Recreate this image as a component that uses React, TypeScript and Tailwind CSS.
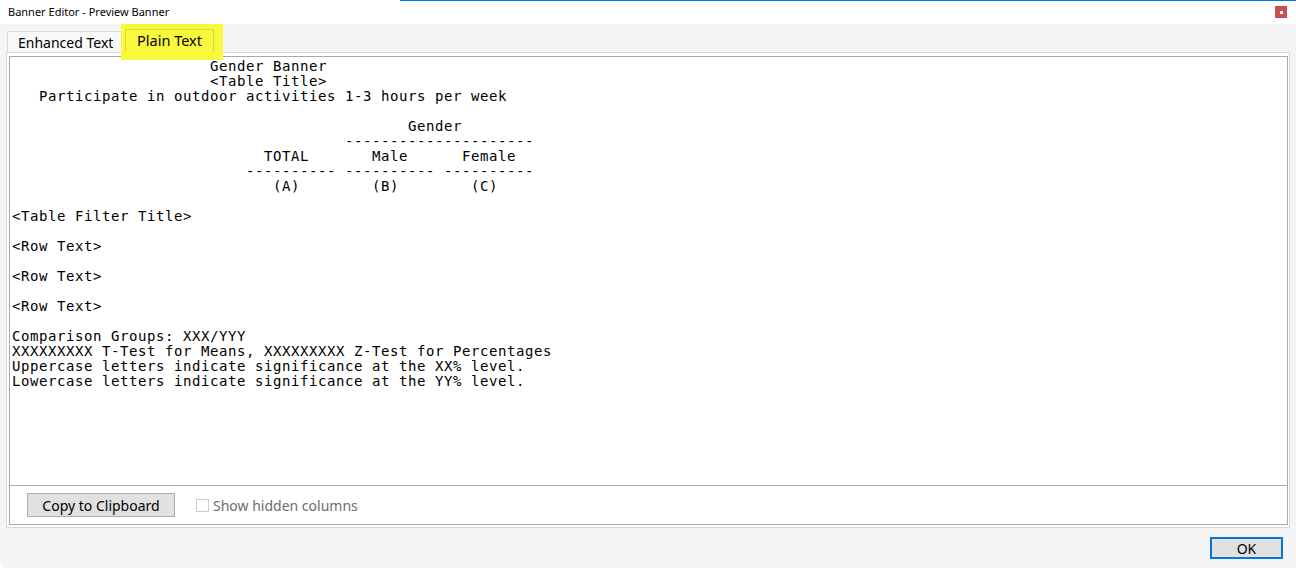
const lines = [
  '                      Gender Banner',
  '                      <Table Title>',
  '   Participate in outdoor activities 1-3 hours per week',
  '',
  '                                            Gender',
  '                                     ---------------------',
  '                            TOTAL       Male      Female',
  '                          ---------- ---------- ----------',
  '                             (A)        (B)        (C)',
  '',
  '<Table Filter Title>',
  '',
  '<Row Text>',
  '',
  '<Row Text>',
  '',
  '<Row Text>',
  '',
  'Comparison Groups: XXX/YYY',
  'XXXXXXXXX T-Test for Means, XXXXXXXXX Z-Test for Percentages',
  'Uppercase letters indicate significance at the XX% level.',
  'Lowercase letters indicate significance at the YY% level.',
]

export default function App() {
  return (
    <div className="w-[1296px] h-[568px] flex flex-col bg-white overflow-hidden font-['Noto_Sans',sans-serif]">
      {/* title bar */}
      <div className="relative h-6 flex items-center px-2 bg-white flex-shrink-0">
        <div className="absolute top-0 left-[400px] right-0 h-px bg-[#0078d7]" />
        <span className="text-[11px] text-black">Banner Editor - Preview Banner</span>
        <div className="flex-1" />
        <div className="w-3 h-3 mr-[1px] bg-[#c75050] flex items-center justify-center">
          <div className="w-[3px] h-[3px] bg-white" />
        </div>
      </div>

      <div className="flex-1 bg-[#f4f4f4] rounded-bl-md flex flex-col px-[6px]">
        {/* tabs */}
        <div className="h-[28px] flex items-end pl-px">
          <div className="w-[118px] h-[21px] pl-[10px] border border-b-0 border-[#dadada] bg-[#f9f9f9] text-[14px] text-black flex items-center">
            Enhanced Text
          </div>
          <div className="h-9 w-[102px] -ml-[4px] mb-[-8px] bg-[#f8f83c] flex items-start justify-start pl-[4px] pt-[5px] z-10">
            <div className="w-[89px] h-[23px] border border-b-0 border-[#dada40] flex items-center justify-center text-[14.5px] text-black">
              Plain Text
            </div>
          </div>
        </div>

        {/* panel */}
        <div className="w-[1284px] h-[476px] border border-[#d9d9d9] bg-white pt-[3px] pl-[2px] pr-px pb-[2px]">
          <div className="h-full border border-[#a9a9a9] flex flex-col">
            <pre className="h-[428px] px-[2px] pt-[2px] bg-white font-['DejaVu_Sans_Mono',monospace] text-[14px] leading-[15px] tracking-[0.57px] text-black">
              {lines.join('\n')}
            </pre>
            <div className="flex-1 border-t border-[#a9a9a9] bg-white flex items-center px-[17px] gap-[21px]">
              <button className="w-[148px] h-6 bg-[#e1e1e1] border border-[#adadad] text-[14px] text-black">
                Copy to Clipboard
              </button>
              <label className="flex items-center gap-[4px] text-[14px] text-[#6d6d6d]">
                <span className="w-[13px] h-[13px] border border-[#cccccc] bg-white" />
                Show hidden columns
              </label>
            </div>
          </div>
        </div>

        <div className="flex justify-end pt-[9px] pr-[7px]">
          <button className="w-[73px] h-[22px] bg-[#e1e1e1] border-2 border-[#0078d7] text-[14px] text-black flex items-center justify-center">
            OK
          </button>
        </div>
      </div>
    </div>
  )
}
